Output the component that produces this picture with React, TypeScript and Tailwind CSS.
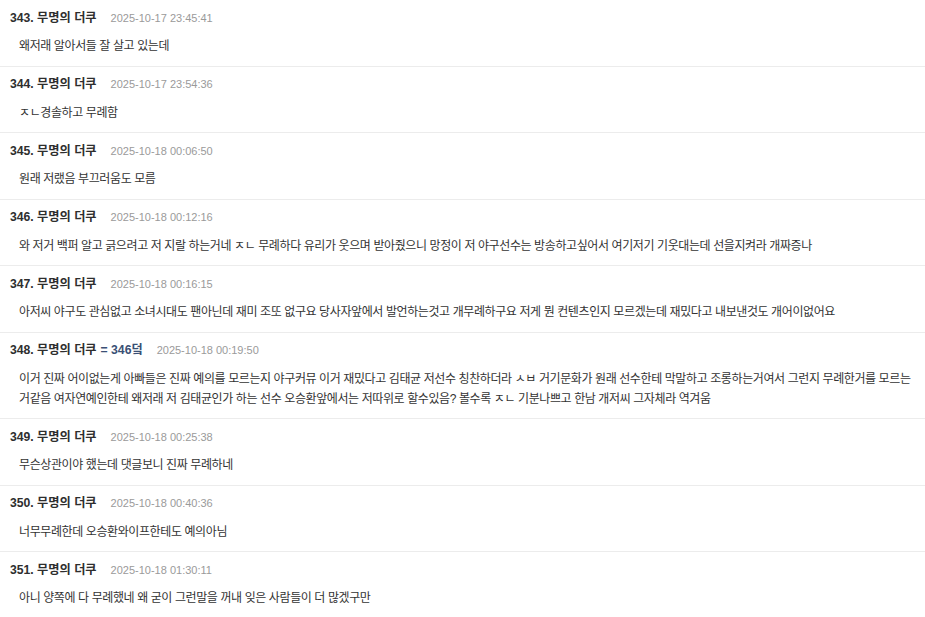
import React from "react";

type Entry = { no: number; extra?: string; date: string; lines: string[] };

const entries: Entry[] = [
  { no: 343, date: "2025-10-17 23:45:41", lines: ["왜저래 알아서들 잘 살고 있는데"] },
  { no: 344, date: "2025-10-17 23:54:36", lines: ["ㅈㄴ경솔하고 무례함"] },
  { no: 345, date: "2025-10-18 00:06:50", lines: ["원래 저랬음 부끄러움도 모름"] },
  {
    no: 346,
    date: "2025-10-18 00:12:16",
    lines: [
      "와 저거 백퍼 알고 긁으려고 저 지랄 하는거네 ㅈㄴ 무례하다 유리가 웃으며 받아줬으니 망정이 저 야구선수는 방송하고싶어서 여기저기 기웃대는데 선을지켜라 개짜증나",
    ],
  },
  {
    no: 347,
    date: "2025-10-18 00:16:15",
    lines: [
      "아저씨 야구도 관심없고 소녀시대도 팬아닌데 재미 조또 없구요 당사자앞에서 발언하는것고 개무례하구요 저게 뭔 컨텐츠인지 모르겠는데 재밌다고 내보낸것도 개어이없어요",
    ],
  },
  {
    no: 348,
    extra: "= 346덬",
    date: "2025-10-18 00:19:50",
    lines: [
      "이거 진짜 어이없는게 아빠들은 진짜 예의를 모르는지 야구커뮤 이거 재밌다고 김태균 저선수 칭찬하더라 ㅅㅂ 거기문화가 원래 선수한테 막말하고 조롱하는거여서 그런지 무례한거를 모르는",
      "거같음 여자연예인한테 왜저래 저 김태균인가 하는 선수 오승환앞에서는 저따위로 할수있음? 볼수록 ㅈㄴ 기분나쁘고 한남 개저씨 그자체라 역겨움",
    ],
  },
  { no: 349, date: "2025-10-18 00:25:38", lines: ["무슨상관이야 했는데 댓글보니 진짜 무례하네"] },
  { no: 350, date: "2025-10-18 00:40:36", lines: ["너무무례한데 오승환와이프한테도 예의아님"] },
  { no: 351, date: "2025-10-18 01:30:11", lines: ["아니 양쪽에 다 무례했네 왜 굳이 그런말을 꺼내 잊은 사람들이 더 많겠구만"] },
];

export default function App() {
  return (
    <div
      className="w-[925px] h-[617px] overflow-hidden bg-white"
      style={{ fontFamily: '"Liberation Sans", "Noto Sans CJK KR", sans-serif' }}
    >
      {entries.map((e) => (
        <div key={e.no} className="border-b border-[#ececec] pt-[8px] pb-[9.5px]">
          <div className="flex items-center h-[20px] pl-[10px]">
            <span className="text-[12.2px] font-bold text-[#2e2e2e]">
              {e.no}. 무명의 더쿠
            </span>
            {e.extra && (
              <span className="ml-[4px] text-[12.2px] font-bold text-[#3a5075]">
                {e.extra}
              </span>
            )}
            <span className="ml-[14px] text-[11px] text-[#9a9a9a]">{e.date}</span>
          </div>
          <div className="mt-[8px] pl-[19px] pr-[10px] text-[12px] leading-[20px] tracking-[-0.4px] text-[#333333]">
            {e.lines.map((l, i) => (
              <div key={i} className="whitespace-nowrap">
                {l}
              </div>
            ))}
          </div>
        </div>
      ))}
    </div>
  );
}
